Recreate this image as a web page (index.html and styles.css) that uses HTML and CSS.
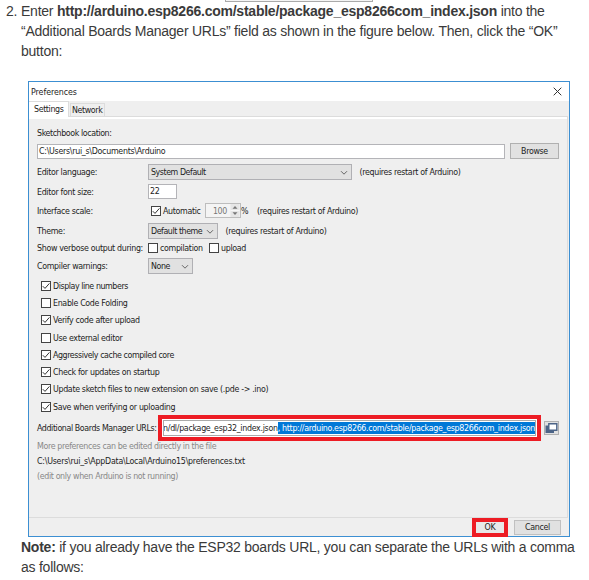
FILE: index.html
```html
<!DOCTYPE html>
<html lang="en">
<head>
<meta charset="utf-8">
<title>Arduino preferences</title>
<link rel="stylesheet" href="styles.css">
</head>
<body>
<svg class="defs" width="0" height="0">
  <symbol id="tick" viewBox="0 0 10 10"><path d="M1.8 5.2 4 7.4 8.4 2.4" fill="none" stroke="#333" stroke-width="1"/></symbol>
  <symbol id="chev" viewBox="0 0 8 6"><path d="M1 1.2 4 4.2 7 1.2" fill="none" stroke="#666" stroke-width="1"/></symbol>
</svg>
<div class="scrap"></div>
<div class="step">
  <span class="num">2.</span>
  <p>Enter <b>http://arduino.esp8266.com/stable/package_esp8266com_index.json</b> into the<br>“Additional Boards Manager URLs” field as shown in the figure below. Then, click the “OK”<br>button:</p>
</div>
<div class="dialog">
  <div class="titlebar"><span>Preferences</span><svg class="close" viewBox="0 0 9 9"><path d="M.7.7 8.3 8.3M8.3.7.7 8.3" stroke="#333" stroke-width="1"/></svg></div>
  <div class="tabs"><span class="tab active">Settings</span><span class="tab">Network</span></div>
  <div class="panel">
    <div class="row h18"><span class="sketchbook">Sketchbook location:</span></div>
    <div class="row h18"><span class="field path">C:\Users\rui_s\Documents\Arduino</span><span class="button browse">Browse</span></div>
    <div class="row h23"><span class="label">Editor language:</span><span class="select lang">System Default<svg><use href="#chev"/></svg></span><span class="hint">(requires restart of Arduino)</span></div>
    <div class="row h17"><span class="label">Editor font size:</span><span class="field size">22</span></div>
    <div class="row h21"><span class="label">Interface scale:</span><span class="box auto"><svg><use href="#tick"/></svg></span><span class="automatic">Automatic</span><span class="spinner"><span class="value">100</span><svg viewBox="0 0 9 13"><path d="M0 0h9v13H0z" fill="#e6e6e6"/><path d="M2 4.8 4.5 2 7 4.8zM2 8.2 4.5 11 7 8.2z" fill="#777"/><path d="M0 6.5h9" stroke="#f7f7f7"/></svg></span><span class="percent">%</span><span class="scale-hint">(requires restart of Arduino)</span></div>
    <div class="row h19"><span class="label">Theme:</span><span class="select theme">Default theme<svg><use href="#chev"/></svg></span><span class="hint">(requires restart of Arduino)</span></div>
    <div class="row h16"><span class="label">Show verbose output during:</span><span class="box"></span><span class="compilation">compilation</span><span class="box"></span><span>upload</span></div>
    <div class="row h19"><span class="label">Compiler warnings:</span><span class="select none">None<svg><use href="#chev"/></svg></span></div>
    <div class="checks">
      <div class="check tight"><span class="box"><svg><use href="#tick"/></svg></span>Display line numbers</div>
      <div class="check"><span class="box"></span>Enable Code Folding</div>
      <div class="check"><span class="box"><svg><use href="#tick"/></svg></span>Verify code after upload</div>
      <div class="check"><span class="box"></span>Use external editor</div>
      <div class="check tight"><span class="box"><svg><use href="#tick"/></svg></span>Aggressively cache compiled core</div>
      <div class="check"><span class="box"><svg><use href="#tick"/></svg></span>Check for updates on startup</div>
      <div class="check"><span class="box"><svg><use href="#tick"/></svg></span>Update sketch files to new extension on save (.pde -&gt; .ino)</div>
      <div class="check"><span class="box"><svg><use href="#tick"/></svg></span>Save when verifying or uploading</div>
    </div>
    <div class="row urls"><span class="url-label">Additional Boards Manager URLs:</span><span class="frame url-frame"><span class="url-field"><span class="url-text">n/dl/package_esp32_index.json</span><span class="selected">, http://arduino.esp8266.com/stable/package_esp8266com_index.json</span></span></span><span class="button windows"><svg viewBox="0 0 13 12"><path d="M0.5 3.5h8.5v7.5H.5z" fill="#4c6487"/><path d="M3.8 1.7h8v6.6h-8z" fill="#fff" stroke="#4c6487" stroke-width="1.4"/></svg></span></div>
    <div class="row h15 muted"><span>More preferences can be edited directly in the file</span></div>
    <div class="row h15"><span class="prefs">C:\Users\rui_s\AppData\Local\Arduino15\preferences.txt</span></div>
    <div class="row h15 muted"><span>(edit only when Arduino is not running)</span></div>
  </div>
  <div class="footer"><span class="frame ok">OK</span><span class="button cancel">Cancel</span></div>
</div>
<p class="note"><b>Note:</b> if you already have the ESP32 boards URL, you can separate the URLs with a comma<br>as follows:</p>
</body>
</html>
```
FILE: styles.css
```css
* { box-sizing: border-box; }
body { margin: 0; height: 580px; overflow: hidden; position: relative; background: #fff; color: #3a3a3a; font: 14px/20px "Liberation Sans", Arial, sans-serif; letter-spacing: -0.24px; }
.defs { position: absolute; }
.scrap { position: absolute; left: 225px; top: -4px; width: 148px; height: 6px; border: 1px solid #aaa; background: #f4f4f4; }
p { margin: 0; white-space: nowrap; }
.step { display: flex; height: 81px; padding-top: 1px; }
.num { flex: none; width: 21px; padding-left: 6px; }
.note { margin: 0 0 0 21px; }

.dialog { display: flex; flex-direction: column; width: 542px; height: 456px; margin-left: 28px; border: 1px solid #3c8fd2; background: #efefef; color: #1c1c1c; font: 8.8px/12px "DejaVu Sans Condensed", "DejaVu Sans", sans-serif; font-stretch: condensed; letter-spacing: -0.33px; white-space: nowrap; }
.tight { letter-spacing: -0.43px; }
.sketchbook { letter-spacing: -0.4px; }
.titlebar { display: flex; justify-content: space-between; align-items: center; height: 19px; padding: 0 7px 0 2px; background: #fff; letter-spacing: -0.05px; }
.close { width: 9px; height: 9px; }
.tabs { display: flex; align-items: flex-end; height: 15px; gap: 1px; letter-spacing: -0.38px; }
.tab { height: 13px; padding: 0 1px; border: 1px solid #dcdcdc; border-bottom: 0; width: 35px; }
.tab.active { height: 16px; width: 40px; padding: 1px 0 0 5px; margin-bottom: -1px; background: #fff; border-left: 0; position: relative; }
.panel { width: 539px; height: 402px; padding: 7px 8px 0; border: 1px solid #dcdcdc; border-left: 0; box-shadow: inset 0 2px #fff; }
.row { display: flex; align-items: center; }
.h15 { height: 15px; } .h16 { height: 16px; } .h17 { height: 17px; } .h18 { height: 18px; }
.h19 { height: 19px; } .h21 { height: 21px; } .h23 { height: 23px; }
.label { width: 111px; flex: none; }
.field { background: #fff; border: 1px solid #b4b4b8; padding: 0 1px; height: 15px; line-height: 13px; }
.path { width: 468px; letter-spacing: -0.28px; }
.size { width: 29px; }
.button { display: flex; align-items: center; justify-content: center; background: #e1e1e1; border: 1px solid #b0b0b0; }
.browse { width: 49px; height: 16px; margin-left: 5px; }
.select { display: flex; align-items: center; justify-content: space-between; height: 16px; padding: 0 3px 0 2px; background: #e1e1e1; border: 1px solid #b0b0b4; letter-spacing: -0.44px; }
.select svg { width: 8px; height: 6px; margin-top: 2px; }
.lang { width: 204px; } .theme { width: 70px; } .none { width: 45px; }
.hint { margin-left: 7.5px; }
.box { display: block; flex: none; width: 10px; height: 10px; background: #fff; border: 1px solid #444; }
.box svg { display: block; width: 10px; height: 10px; margin: -1px; }
.auto { margin-left: 3px; }
.automatic { width: 42px; margin-left: 2px; }
.spinner { display: flex; width: 36px; height: 15px; border: 1px solid #bdbdbd; background: #f4f4f4; }
.value { width: 24px; text-align: right; padding-right: 3px; color: #777; line-height: 14px; }
.spinner svg { width: 10px; height: 13px; }
.percent { width: 16px; }
.compilation { width: 49px; margin-left: 2px; }
.compilation + .box { margin-right: 2px; }
.checks { padding: 2px 0 0 4px; }
.check { display: flex; align-items: center; height: 17.3px; gap: 2px; }
.urls { height: 21px; margin-top: 2.1px; }
.url-label { width: 121px; flex: none; letter-spacing: -0.4px; }
.frame { border: 4px solid #ed1c24; }
.url-frame { width: 383px; height: 26px; flex: none; padding: 1px; background: #fff; }
.url-field { display: flex; justify-content: flex-end; align-items: center; overflow: hidden; height: 16px; border: 1px solid #aaa; }
.url-text { letter-spacing: -0.3px; }
.selected { height: 12px; background: #0078d7; color: #fff; letter-spacing: -0.31px; }
.windows { width: 15px; height: 14px; margin-left: 3px; }
.windows svg { width: 13px; height: 12px; }
.prefs { letter-spacing: -0.24px; }
.muted { color: #888; letter-spacing: -0.36px; }
.footer { display: flex; justify-content: flex-end; align-items: center; height: 18px; padding-right: 8px; gap: 6px; }
.ok { display: flex; align-items: center; justify-content: center; width: 36px; height: 19px; background: #e8e8e8; }
.cancel { width: 47px; height: 15px; border-color: #c0c0c0; }
```
